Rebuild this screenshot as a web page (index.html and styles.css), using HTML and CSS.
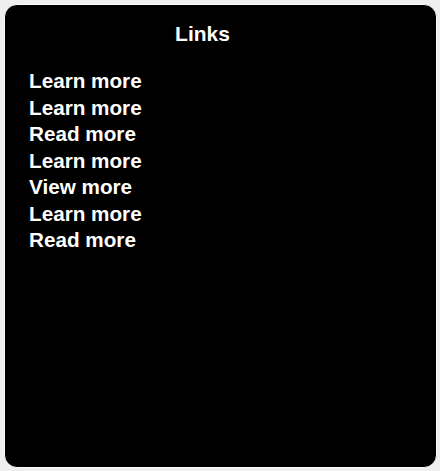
FILE: index.html
```html
<!DOCTYPE html>
<html>
<head>
<meta charset="utf-8">
<link rel="stylesheet" href="styles.css">
</head>
<body>
<div class="card">
  <h1 class="title">Links</h1>
  <ul class="links">
    <li><a href="#">Learn more</a></li>
    <li><a href="#">Learn more</a></li>
    <li><a href="#">Read more</a></li>
    <li><a href="#">Learn more</a></li>
    <li><a href="#">View more</a></li>
    <li><a href="#">Learn more</a></li>
    <li><a href="#">Read more</a></li>
  </ul>
</div>
</body>
</html>
```

FILE: styles.css
```css
html, body {
  margin: 0;
  padding: 0;
  background: #efefef;
  font-family: "Liberation Sans", Arial, sans-serif;
}
body {
  padding: 4px 3px 3px 4px;
  width: 440px;
  height: 471px;
  box-sizing: border-box;
}
.card {
  box-sizing: border-box;
  height: 464px;
  background: #000;
  border: 1px solid #fbfbfb;
  border-radius: 13px;
  padding: 17px 60px 0 24px;
  color: #fff;
}
.title {
  margin: 0;
  font-size: 21px;
  line-height: 24px;
  font-weight: bold;
  text-align: center;
}
.links {
  list-style: none;
  margin: 22px 0 0;
  padding: 0;
}
.links li {
  font-size: 20.7px;
  line-height: 26.5px;
  font-weight: bold;
}
.links a {
  color: #fff;
  text-decoration: none;
}
```
